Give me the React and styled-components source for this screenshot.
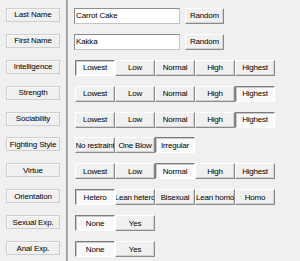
import { useState } from "react";
import styled, { createGlobalStyle } from "styled-components";

const GlobalStyle = createGlobalStyle`
  html, body {
    margin: 0;
    padding: 0;
    background: #f0f0f0;
  }
  body {
    font-family: "Liberation Sans", Arial, sans-serif;
    font-size: 8px;
    letter-spacing: -0.15px;
    color: #000;
  }
`;

const Form = styled.div`
  display: flex;
  width: 300px;
  height: 261px;
  overflow: hidden;
  background: #f0f0f0;
`;

const LabelColumn = styled.div`
  width: 66px;
  padding-top: 2px;
  display: flex;
  flex-direction: column;
`;

const ControlColumn = styled.div`
  flex: 1;
  padding-top: 2px;
  padding-left: 7px;
  border-left: 1px solid #9c9c9c;
  box-shadow: inset 1px 0 0 #b0b0b0;
  display: flex;
  flex-direction: column;
`;

const Row = styled.div`
  height: 26px;
  display: flex;
  align-items: center;
`;

const FieldLabel = styled.div`
  box-sizing: border-box;
  width: 54px;
  height: 14px;
  margin-left: 6px;
  border: 1px solid #cecece;
  box-shadow: inset 1px 1px 0 #fbfbfb;
  display: flex;
  align-items: center;
  justify-content: center;
  white-space: nowrap;
`;

const TextBox = styled.input`
  box-sizing: border-box;
  width: 106px;
  height: 16px;
  margin: 2px 0 0;
  padding: 0 1px;
  border: 1px solid #8e8e8e;
  border-right-color: #c4c4c4;
  border-bottom-color: #c4c4c4;
  background: #fff;
  font-family: inherit;
  font-size: 8px;
  letter-spacing: inherit;
  color: #000;
  outline: none;
`;

const Button = styled.button`
  box-sizing: border-box;
  width: ${(p) => p.$width || 40}px;
  height: 16px;
  margin: 2px 0 0;
  padding: 0;
  display: flex;
  align-items: center;
  justify-content: center;
  overflow: hidden;
  white-space: nowrap;
  font-family: inherit;
  font-size: 8px;
  letter-spacing: -0.2px;
  color: #000;
  cursor: default;
  border: 1px solid;
  border-color: ${(p) =>
    p.$pressed ? "#7c7c7c #ffffff #ffffff #7c7c7c" : "#ffffff #8a8a8a #8a8a8a #ffffff"};
  background: ${(p) => (p.$pressed ? "#f9f9f9" : "#f0f0f0")};
  box-shadow: ${(p) =>
    p.$pressed ? "inset 1px 1px 0 #c8c8c8" : "inset -1px -1px 0 #d2d2d2"};
`;

const Group = styled.div`
  display: flex;
  margin-left: 1px;
`;

const RandomButton = styled(Button)`
  margin-left: 5px;
`;

const levels = ["Lowest", "Low", "Normal", "High", "Highest"];

const choiceRows = [
  { label: "Intelligence", options: levels, selected: 0 },
  { label: "Strength", options: levels, selected: 4 },
  { label: "Sociability", options: levels, selected: 4 },
  { label: "Fighting Style", options: ["No restraint", "One Blow", "Irregular"], selected: 2 },
  { label: "Virtue", options: levels, selected: 2 },
  {
    label: "Orientation",
    options: ["Hetero", "Lean hetero", "Bisexual", "Lean homo", "Homo"],
    selected: 0,
  },
  { label: "Sexual Exp.", options: ["None", "Yes"], selected: 0 },
  { label: "Anal Exp.", options: ["None", "Yes"], selected: 0 },
];

function ChoiceGroup({ options, selected }) {
  const [value, setValue] = useState(selected);
  return (
    <Group>
      {options.map((o, i) => (
        <Button key={o} $pressed={i === value} onClick={() => setValue(i)}>
          {o}
        </Button>
      ))}
    </Group>
  );
}

export default function App() {
  const [lastName, setLastName] = useState("Carrot Cake");
  const [firstName, setFirstName] = useState("Kakka");

  const labels = ["Last Name", "First Name", ...choiceRows.map((r) => r.label)];

  return (
    <>
      <GlobalStyle />
      <Form>
        <LabelColumn>
          {labels.map((l) => (
            <Row key={l}>
              <FieldLabel>{l}</FieldLabel>
            </Row>
          ))}
        </LabelColumn>
        <ControlColumn>
          <Row>
            <TextBox value={lastName} onChange={(e) => setLastName(e.target.value)} />
            <RandomButton $width={39}>Random</RandomButton>
          </Row>
          <Row>
            <TextBox value={firstName} onChange={(e) => setFirstName(e.target.value)} />
            <RandomButton $width={39}>Random</RandomButton>
          </Row>
          {choiceRows.map((r) => (
            <Row key={r.label}>
              <ChoiceGroup options={r.options} selected={r.selected} />
            </Row>
          ))}
        </ControlColumn>
      </Form>
    </>
  );
}
